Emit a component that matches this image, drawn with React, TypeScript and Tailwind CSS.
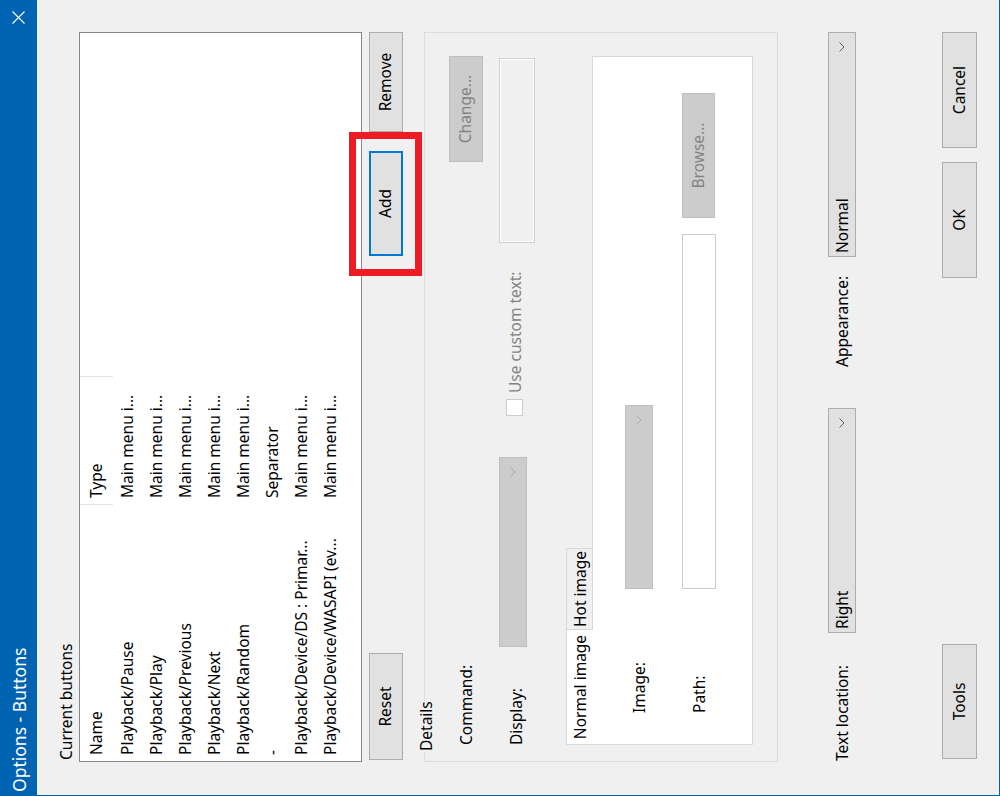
import React from "react";

const rows = [
  { name: "Playback/Pause", type: "Main menu i..." },
  { name: "Playback/Play", type: "Main menu i..." },
  { name: "Playback/Previous", type: "Main menu i..." },
  { name: "Playback/Next", type: "Main menu i..." },
  { name: "Playback/Random", type: "Main menu i..." },
  { name: "-", type: "Separator" },
  { name: "Playback/Device/DS : Primar...", type: "Main menu i..." },
  { name: "Playback/Device/WASAPI (ev...", type: "Main menu i..." },
];

function Chevron({ disabled }: { disabled?: boolean }) {
  return (
    <svg width="10" height="6" viewBox="0 0 10 6" className="shrink-0">
      <polyline
        points="0.5,0.5 5,5 9.5,0.5"
        fill="none"
        stroke={disabled ? "#a8a8a8" : "#5f5f5f"}
        strokeWidth="1"
      />
    </svg>
  );
}

function Combo({ text, width, disabled }: { text?: string; width: string; disabled?: boolean }) {
  return (
    <div
      className={`${width} h-[28px] flex items-center justify-between pl-[3px] pr-[9px] border ${
        disabled ? "bg-[#cccccc] border-[#bfbfbf]" : "bg-[#e1e1e1] border-[#adadad]"
      }`}
    >
      <span className="leading-[24px]">{text}</span>
      <Chevron disabled={disabled} />
    </div>
  );
}

function Button({ label, width, disabled }: { label: string; width: string; disabled?: boolean }) {
  return (
    <div
      className={`${width} h-full flex items-center justify-center border ${
        disabled
          ? "bg-[#cccccc] border-[#bfbfbf] text-[#838383]"
          : "bg-[#e1e1e1] border-[#adadad] text-black"
      }`}
    >
      {label}
    </div>
  );
}

function Dialog() {
  return (
    <div className="w-[796px] h-[1000px] bg-[#f0f0f0] border-l border-b border-[#0063b1] flex flex-col text-[15.5px] text-black font-['Noto_Sans',sans-serif]">
      {/* title bar */}
      <div className="h-[37px] shrink-0 bg-[#0063b1] text-white flex items-center pl-[3px]">
        <span className="text-[17.5px] leading-[24px]">Options - Buttons</span>
        <svg width="13" height="13" viewBox="0 0 13 13" className="ml-auto mr-[11px]">
          <path d="M0.5 0.5 L12.5 12.5 M12.5 0.5 L0.5 12.5" stroke="#ffffff" strokeWidth="1.1" />
        </svg>
      </div>

      <div className="flex flex-col pl-[33px] pr-[32px]">
        <div className="mt-[17px] ml-[2px] h-[24px] leading-[24px]">Current buttons</div>

        {/* list view */}
        <div className="mt-[1px] h-[283px] border border-[#828790] bg-white overflow-hidden">
          <div className="flex h-[33px]">
            <div className="w-[257px] pl-[6px] flex items-center border-r border-[#e5e5e5]">Name</div>
            <div className="w-[128px] pl-[6px] flex items-center border-r border-[#e5e5e5]">Type</div>
          </div>
          {rows.map((r, i) => (
            <div key={i} className="flex h-[29px] items-center">
              <div className="w-[257px] pl-[6px] whitespace-nowrap overflow-hidden">{r.name}</div>
              <div className="w-[128px] pl-[6px] whitespace-nowrap overflow-hidden">{r.type}</div>
            </div>
          ))}
        </div>

        {/* list buttons */}
        <div className="mt-[7px] flex h-[34px]">
          <div className="ml-[2px] w-[107px] h-full">
            <Button label="Reset" width="w-full" />
          </div>
          <div className="ml-auto relative w-[105px] h-full">
            <div className="w-full h-full flex items-center justify-center bg-[#e1e1e1] border-2 border-[#0078d7]">
              Add
            </div>
            <div className="absolute -left-[20px] -right-[19px] -top-[20px] -bottom-[19px] border-[7px] border-[#ed1c24]" />
          </div>
          <div className="ml-[19px] w-[100px] h-full">
            <Button label="Remove" width="w-full" />
          </div>
        </div>

        {/* details group */}
        <div className="mt-[21px] h-[354px] border border-[#dcdcdc] relative pl-[16px] pr-[22px] pt-[24px]">
          <div className="absolute left-[9px] -top-[11px] px-[1px] bg-[#f0f0f0] leading-[24px]">Details</div>

          <div className="flex items-center h-[34px]">
            <span className="leading-[24px]">Command:</span>
            <div className="ml-auto mr-[1px] w-[106px] h-full">
              <Button label="Change..." width="w-full" disabled />
            </div>
          </div>

          <div className="mt-[16px] flex items-start h-[36px]">
            <span className="w-[98px] mt-[5px] leading-[24px]">Display:</span>
            <div className="h-[29px]">
              <Combo width="w-[190px]" disabled />
            </div>
            <div className="ml-[41px] mt-[7px] w-[17px] h-[17px] bg-white border border-[#cccccc]" />
            <span className="ml-[6px] mt-[4px] leading-[24px] text-[#838383]">Use custom text:</span>
            <div className="ml-auto mr-[3px] w-[185px] h-[36px] border border-[#cfcfcf] shadow-[inset_0_0_0_1px_#ffffff]" />
          </div>

          {/* tabs */}
          <div className="mt-[31px] flex h-[26px] relative z-10">
            <div className="w-[116px] h-[27px] bg-white border border-b-0 border-[#d9d9d9] flex items-center justify-center leading-[24px] whitespace-nowrap">
              Normal image
            </div>
            <div className="w-[81px] h-[26px] bg-[#f0f0f0] border border-l-0 border-b-0 border-[#d9d9d9] flex items-center justify-center leading-[24px] whitespace-nowrap">
              Hot image
            </div>
          </div>
          <div className="w-[689px] h-[161px] bg-white border border-[#d9d9d9] pt-[32px] pl-[31px]">
            <div className="flex items-center h-[28px]">
              <span className="w-[124px] leading-[24px]">Image:</span>
              <Combo width="w-[184px]" disabled />
            </div>
            <div className="mt-[29px] flex items-start h-[34px]">
              <span className="w-[124px] mt-[5px] leading-[24px]">Path:</span>
              <div className="w-[355px] h-[34px] bg-white border border-[#cccccc]" />
              <div className="ml-[16px] w-[125px] h-[33px]">
                <Button label="Browse..." width="w-full" disabled />
              </div>
            </div>
          </div>
        </div>

        {/* appearance */}
        <div className="mt-[50px] flex items-center h-[28px]">
          <span className="w-[128px] ml-[1px] leading-[24px]">Text location:</span>
          <Combo text="Right" width="w-[225px]" />
          <span className="ml-[41px] w-[110px] leading-[24px]">Appearance:</span>
          <Combo text="Normal" width="w-[225px]" />
        </div>

        {/* dialog buttons */}
        <div className="mt-[86px] flex h-[35px]">
          <div className="ml-[3px] w-[115px] h-full">
            <Button label="Tools" width="w-full" />
          </div>
          <div className="ml-auto w-[116px] h-full">
            <Button label="OK" width="w-full" />
          </div>
          <div className="ml-[14px] w-[116px] h-full">
            <Button label="Cancel" width="w-full" />
          </div>
        </div>
      </div>
    </div>
  );
}

export default function App() {
  return (
    <div className="relative w-[1000px] h-[796px] overflow-hidden bg-[#f0f0f0]">
      {/* the dialog is shown turned a quarter turn to the left */}
      <div className="absolute left-0 top-0 origin-top-left [transform:translateY(796px)_rotate(-90deg)]">
        <Dialog />
      </div>
    </div>
  );
}
